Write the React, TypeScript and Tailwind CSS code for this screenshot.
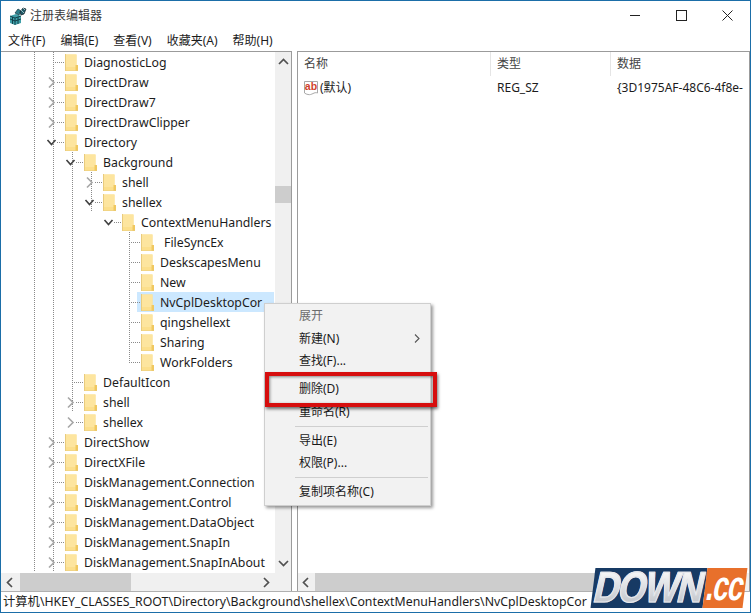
import React from "react";

type Row = {
  name: string;
  level: number;
  chevron?: "right" | "down";
  guides: number[];
  selected?: boolean;
  pad?: boolean;
};

const g0 = [33, 52];
const rows: Row[] = [
  { name: "DiagnosticLog", level: 0, guides: g0 },
  { name: "DirectDraw", level: 0, chevron: "right", guides: g0 },
  { name: "DirectDraw7", level: 0, chevron: "right", guides: g0 },
  { name: "DirectDrawClipper", level: 0, chevron: "right", guides: g0 },
  { name: "Directory", level: 0, chevron: "down", guides: g0 },
  { name: "Background", level: 1, chevron: "down", guides: [33, 52, 71] },
  { name: "shell", level: 2, chevron: "right", guides: [33, 52, 71, 90] },
  { name: "shellex", level: 2, chevron: "down", guides: [33, 52, 71, 90] },
  { name: "ContextMenuHandlers", level: 3, chevron: "down", guides: [33, 52, 71] },
  { name: "FileSyncEx", level: 4, guides: [33, 52, 71, 128], pad: true },
  { name: "DeskscapesMenu", level: 4, guides: [33, 52, 71, 128] },
  { name: "New", level: 4, guides: [33, 52, 71, 128] },
  { name: "NvCplDesktopCor", level: 4, guides: [33, 52, 71, 128], selected: true },
  { name: "qingshellext", level: 4, guides: [33, 52, 71, 128] },
  { name: "Sharing", level: 4, guides: [33, 52, 71, 128] },
  { name: "WorkFolders", level: 4, guides: [33, 52, 71, 128] },
  { name: "DefaultIcon", level: 1, guides: [33, 52, 71] },
  { name: "shell", level: 1, chevron: "right", guides: [33, 52, 71] },
  { name: "shellex", level: 1, chevron: "right", guides: [33, 52] },
  { name: "DirectShow", level: 0, chevron: "right", guides: g0 },
  { name: "DirectXFile", level: 0, chevron: "right", guides: g0 },
  { name: "DiskManagement.Connection", level: 0, guides: g0 },
  { name: "DiskManagement.Control", level: 0, chevron: "right", guides: g0 },
  { name: "DiskManagement.DataObject", level: 0, chevron: "right", guides: g0 },
  { name: "DiskManagement.SnapIn", level: 0, chevron: "right", guides: g0 },
  { name: "DiskManagement.SnapInAbout", level: 0, chevron: "right", guides: g0 },
];

function Gutter({ row }: { row: Row }) {
  const fx = 64 + row.level * 19;
  const cx = fx - 14;
  return (
    <svg width={fx} height={20} className="shrink-0 block">
      {row.guides.map((x, i) => {
        const isOwn = x === cx + 1;
        const hide = row.name === "WorkFolders" && x === 128;
        return (
          <line
            key={i}
            x1={x + 0.5}
            x2={x + 0.5}
            y1={0}
            y2={hide ? 10 : 20}
            stroke="#8a8a8a"
            strokeDasharray="1 1"
            opacity={isOwn && row.chevron ? 0 : 1}
          />
        );
      })}
      <line
        x1={row.chevron ? cx + 6 : cx + 2}
        x2={fx}
        y1={10.5}
        y2={10.5}
        stroke="#8a8a8a"
        strokeDasharray="1 1"
      />
      {row.chevron === "right" && (
        <path d={`M${cx - 2} 5.5 L${cx + 3} 10.5 L${cx - 2} 15.5`} fill="none" stroke="#a6a6a6" strokeWidth="1.6" />
      )}
      {row.chevron === "down" && (
        <path d={`M${cx - 3.5} 8 L${cx + 0.5} 12.5 L${cx + 4.5} 8`} fill="none" stroke="#404040" strokeWidth="1.6" />
      )}
    </svg>
  );
}

function Folder() {
  return (
    <svg width={14} height={17} viewBox="0 0 14 17" className="shrink-0 block">
      <path d="M1 0.5 H11.5 V17 H1 Z" fill="#fcdf8c" />
      <path d="M1 0.5 H11.5 V13 H1 Z" fill="#fde59f" />
      <path d="M10.5 11 H13 V17 H10.5 Z" fill="#f0c860" />
      <path d="M0.5 0 V17 H13" fill="none" stroke="#e9cb7d" />
    </svg>
  );
}

function TreeRow({ row }: { row: Row }) {
  return (
    <div className="h-5 flex items-center relative whitespace-nowrap">
      {row.selected && <div className="absolute left-[136px] top-0 w-[137px] h-5 bg-[#cce8ff]" />}
      <div className="relative flex items-center">
        <Gutter row={row} />
        <Folder />
        <span className={row.pad ? "ml-[9px] pt-[2px]" : "ml-[5px] pt-[2px]"}>{row.name}</span>
      </div>
    </div>
  );
}

function Arrow({ dir }: { dir: "up" | "down" | "left" | "right" }) {
  const d = {
    up: "M1 7 L5.5 2.5 L10 7",
    down: "M1 3 L5.5 7.5 L10 3",
    left: "M7 1 L2.5 5.5 L7 10",
    right: "M3 1 L7.5 5.5 L3 10",
  }[dir];
  return (
    <svg width={11} height={11} viewBox="0 0 11 11" className="block">
      <path d={d} fill="none" stroke="#505050" strokeWidth="1.7" />
    </svg>
  );
}

function AppIcon() {
  return (
    <svg width={18} height={18} viewBox="0 0 18 18" className="block">
      <path d="M1 9 L7 7 L12 9 L12 16 L6 18 L1 16 Z" fill="#3f9fa8" />
      <path d="M1 9 L6 11 L6 18 M6 11 L12 9 M1 12 L6 14 L12 12 M3.5 10 V17 M9 10 V17" fill="none" stroke="#0f3a44" strokeWidth="0.9" />
      <path d="M6 6 L9 2 L12 4 L10 8 Z" fill="#2c7f8c" stroke="#12333c" strokeWidth="0.7" />
      <path d="M11 5 L14 1 L17 2 L15 7 L12 8 Z" fill="#205a68" stroke="#101f28" strokeWidth="0.7" />
      <path d="M14 1 L16 3 M12 3 L15 6" stroke="#cfe9ec" strokeWidth="0.7" />
    </svg>
  );
}

function AbIcon() {
  return (
    <svg width={16} height={16} viewBox="0 0 16 16" className="block shrink-0">
      <path d="M1.5 1.5 H14.5 V13 C11 11.5 9 15.5 5 14.5 C3.5 14.2 2.5 13.8 1.5 13 Z" fill="#fff" stroke="#a9a9a9" />
      <text x="8" y="10" textAnchor="middle" fontSize="10.5" fontWeight="700" fill="#d0402a" fontFamily="'Liberation Sans', sans-serif">ab</text>
    </svg>
  );
}

function MenuItem({ label, arrow, muted, className }: { label: string; arrow?: boolean; muted?: boolean; className: string }) {
  return (
    <div className={`flex items-center justify-between pl-[34px] pr-[10px] ${muted ? "text-[#6d6d6d]" : "text-[#1a1a1a]"} ${className}`}>
      <span>{label}</span>
      {arrow && (
        <svg width={6} height={9} viewBox="0 0 6 9" className="block">
          <path d="M1 0.5 L5 4.5 L1 8.5" fill="none" stroke="#555" strokeWidth="1.1" />
        </svg>
      )}
    </div>
  );
}

const UI = "font-['Noto_Sans','Noto_Sans_CJK_SC',sans-serif]";

export default function App() {
  return (
    <div className={`w-[751px] h-[613px] relative overflow-hidden bg-white border border-[#1b6ea8] flex flex-col text-[12.3px] text-[#1c1c1c] ${UI}`}>
      <div className="h-[29px] shrink-0 flex items-center pl-[8px]">
        <AppIcon />
        <span className="ml-[3px] text-[#3a3a3a] text-[12px]">注册表编辑器</span>
        <div className="ml-auto flex items-center">
          <div className="w-[46px] flex justify-center">
            <div className="w-[10px] h-px bg-[#222]" />
          </div>
          <div className="w-[46px] flex justify-center">
            <div className="w-[11px] h-[11px] border border-[#222]" />
          </div>
          <div className="w-[46px] flex justify-center">
            <svg width={11} height={11} viewBox="0 0 11 11" className="block">
              <path d="M0.5 0.5 L10.5 10.5 M10.5 0.5 L0.5 10.5" stroke="#222" strokeWidth="1" />
            </svg>
          </div>
        </div>
      </div>
      <div className="h-[21px] shrink-0 flex items-center gap-[15px] pl-[7px] text-[12px]">
        <span>文件(F)</span>
        <span>编辑(E)</span>
        <span>查看(V)</span>
        <span>收藏夹(A)</span>
        <span>帮助(H)</span>
      </div>
      <div className="flex-1 flex min-h-0 gap-[5px]">
        <div className="w-[291px] border border-[#9b9b9b] border-b-0 border-l-0 flex flex-col min-h-0">
          <div className="flex-1 flex min-h-0">
            <div className="flex-1 overflow-hidden min-w-0">
              {rows.map((r, i) => (
                <TreeRow key={i} row={r} />
              ))}
            </div>
            <div className="w-[16px] bg-[#f0f0f0] flex flex-col items-center shrink-0">
              <div className="h-5 flex items-center"><Arrow dir="up" /></div>
              <div className="flex-1 w-full pt-[114px]">
                <div className="w-full h-[17px] bg-[#cdcdcd]" />
              </div>
              <div className="h-5 flex items-center"><Arrow dir="down" /></div>
            </div>
          </div>
          <div className="h-[18px] shrink-0 bg-[#f0f0f0] flex items-center">
            <div className="w-[19px] flex justify-center"><Arrow dir="left" /></div>
            <div className="w-[111px] h-full bg-[#cdcdcd]" />
            <div className="flex-1" />
            <div className="w-[19px] flex justify-center mr-[15px]"><Arrow dir="right" /></div>
          </div>
        </div>
        <div className="flex-1 border border-[#9b9b9b] border-b-0 flex flex-col min-h-0 min-w-0">
          <div className="h-[24px] shrink-0 flex items-center text-[12px] text-[#444]">
            <div className="w-[193px] h-full pl-[6px] border-r border-[#e5e5e5] flex items-center">名称</div>
            <div className="w-[120px] h-full pl-[6px] border-r border-[#e5e5e5] flex items-center">类型</div>
            <div className="flex-1 pl-[6px]">数据</div>
          </div>
          <div className="h-[22px] shrink-0 flex items-center whitespace-nowrap text-[12px] overflow-hidden pt-[2px]">
            <div className="w-[193px] pl-[5px] flex items-center gap-px"><AbIcon /><span>(默认)</span></div>
            <div className="w-[120px] pl-[6px]">REG_SZ</div>
            <div className="pl-[6px]">{"{3D1975AF-48C6-4f8e-"}</div>
          </div>
          <div className="flex-1" />
          <div className="h-[18px] shrink-0 bg-[#f0f0f0] flex items-center">
            <div className="w-[17px] flex justify-center"><Arrow dir="left" /></div>
            <div className="flex-1 h-full bg-[#cdcdcd]" />
            <div className="w-[17px] flex justify-center"><Arrow dir="right" /></div>
          </div>
        </div>
      </div>
      <div className="h-[21px] shrink-0 flex items-center pl-[2px] whitespace-nowrap overflow-hidden border-t border-[#b0b0b0]">
        计算机\HKEY_CLASSES_ROOT\Directory\Background\shellex\ContextMenuHandlers\NvCplDesktopCor
      </div>

      <div className="absolute left-[263px] top-[302px] w-[167px] h-[203px] bg-[#f2f2f2] border border-[#cfcfcf] shadow-[2px_2px_3px_rgba(0,0,0,0.4)] text-[12px] pt-[1px]">
        <MenuItem label="展开" muted className="h-[22px]" />
        <MenuItem label="新建(N)" arrow className="h-[23px]" />
        <MenuItem label="查找(F)..." className="h-[22px]" />
        <div className="h-[5px]" />
        <MenuItem label="删除(D)" className="h-[23px]" />
        <MenuItem label="重命名(R)" className="h-[23px]" />
        <div className="ml-[30px] mr-[2px] h-px bg-[#cfcfcf] my-[3px]" />
        <MenuItem label="导出(E)" className="h-[22px]" />
        <MenuItem label="权限(P)..." className="h-[22px]" />
        <div className="ml-[30px] mr-[2px] h-px bg-[#cfcfcf] my-[3px]" />
        <MenuItem label="复制项名称(C)" className="h-[22px]" />
      </div>
      <div className="absolute left-[264px] top-[371px] w-[172px] h-[35px] border-[4px] border-[#d60e0e] shadow-[1px_2px_3px_rgba(0,0,0,0.55),inset_1px_1px_3px_rgba(0,0,0,0.45)]" />

      <div className="absolute left-[592px] top-[567px] w-[152px] h-[40px] flex">
        <div className="w-[112px] h-[40px] bg-[#173a64] -skew-x-[7deg] flex items-center justify-center">
          <span className="font-['Liberation_Sans',sans-serif] font-bold text-[36px] tracking-[-1.5px] leading-none scale-y-[1.2] -skew-x-[7deg] bg-gradient-to-b from-white to-[#b9bdc4] bg-clip-text text-transparent [-webkit-text-stroke:1px_#e6e8ec]">DOWN</span>
        </div>
        <div className="w-[40px] h-[40px] bg-[#e8702b] -skew-x-[7deg] flex items-center justify-center">
          <span className="font-['Liberation_Sans',sans-serif] font-bold text-[28px] tracking-[-1px] leading-none text-white scale-y-[1.5] -skew-x-[7deg] pb-[2px]">.cc</span>
        </div>
      </div>
    </div>
  );
}
